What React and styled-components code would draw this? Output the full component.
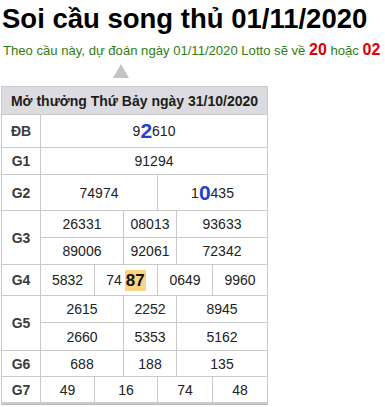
import styled, { createGlobalStyle } from "styled-components";

const Global = createGlobalStyle`
  body { margin: 0; background: #fff; font-family: "Liberation Sans", Arial, sans-serif; }
`;

const Page = styled.div`
  padding: 0 1px;
  width: 385px;
  box-sizing: border-box;
`;

const Title = styled.h1`
  margin: 0;
  padding: 1px 0 0 1px;
  font-size: 27.5px;
  line-height: 36px;
  font-weight: bold;
  color: #000;
  white-space: nowrap;
`;

const Lead = styled.p`
  margin: 2px 0 0 2px;
  font-size: 13.1px;
  line-height: 22px;
  color: #2f7d14;
  white-space: nowrap;
`;

const Red = styled.b`
  color: #e00000;
  font-size: 16px;
`;

const Arrow = styled.div`
  width: 0;
  height: 0;
  margin: 2px 0 8px 112px;
  border-left: 8px solid transparent;
  border-right: 8px solid transparent;
  border-bottom: 14px solid #c4c4c4;
`;

const Table = styled.div`
  display: grid;
  width: 267px;
  box-sizing: border-box;
  grid-template-columns: 38px 53px 28px 33px 18px 35px 54px;
  grid-template-rows: 27px 32px 26px 35px 26px 26px 30px 26px 27px 25px 25px;
  gap: 1px;
  padding: 1px 1px 2px 1px;
  background: #cacaca;
  border-bottom: 1px solid #b8b8b8;
`;

const Head = styled.div`
  grid-column: 1 / -1;
  background: #dcdce0;
  display: flex;
  align-items: center;
  justify-content: center;
  font-weight: bold;
  font-size: 14px;
  color: #1c1c1c;
`;

const Label = styled.div`
  grid-column: 1;
  grid-row: ${(p) => p.$row || "auto"};
  background: #fff;
  display: flex;
  align-items: center;
  justify-content: center;
  font-weight: bold;
  font-size: 14px;
  color: #3c3c3c;
`;

const Cell = styled.div`
  grid-column: ${(p) => p.$col};
  background: #fff;
  display: flex;
  align-items: center;
  justify-content: center;
  font-size: 14px;
  color: #222;
`;

const Hit = styled.b`
  color: #1d44d0;
  font-size: 21px;
`;

const Mark = styled.b`
  background: #fcd483;
  color: #111;
  font-size: 17px;
  line-height: 21px;
  padding: 0 1px;
  margin-left: 3px;
`;

const third = ["2 / 4", "4 / 6", "6 / -1"];
const quarter = ["2 / 3", "3 / 5", "5 / 7", "7 / 8"];

function Row3({ values }) {
  return values.map((v, i) => (
    <Cell key={i} $col={third[i]}>{v}</Cell>
  ));
}

export default function App() {
  return (
    <Page>
      <Global />
      <Title>Soi cầu song thủ 01/11/2020</Title>
      <Lead>
        Theo cầu này, dự đoán ngày 01/11/2020 Lotto sẽ về <Red>20</Red> hoặc <Red>02</Red>
      </Lead>
      <Arrow />
      <Table>
        <Head>Mở thưởng Thứ Bảy ngày 31/10/2020</Head>

        <Label>ĐB</Label>
        <Cell $col="2 / -1">9<Hit>2</Hit>610</Cell>

        <Label>G1</Label>
        <Cell $col="2 / -1">91294</Cell>

        <Label>G2</Label>
        <Cell $col="2 / 5">74974</Cell>
        <Cell $col="5 / -1">1<Hit>0</Hit>435</Cell>

        <Label $row="span 2">G3</Label>
        <Row3 values={["26331", "08013", "93633"]} />
        <Row3 values={["89006", "92061", "72342"]} />

        <Label>G4</Label>
        <Cell $col={quarter[0]}>5832</Cell>
        <Cell $col={quarter[1]}>74<Mark>87</Mark></Cell>
        <Cell $col={quarter[2]}>0649</Cell>
        <Cell $col={quarter[3]}>9960</Cell>

        <Label $row="span 2">G5</Label>
        <Row3 values={["2615", "2252", "8945"]} />
        <Row3 values={["2660", "5353", "5162"]} />

        <Label>G6</Label>
        <Row3 values={["688", "188", "135"]} />

        <Label>G7</Label>
        {["49", "16", "74", "48"].map((v, i) => (
          <Cell key={i} $col={quarter[i]}>{v}</Cell>
        ))}
      </Table>
    </Page>
  );
}
